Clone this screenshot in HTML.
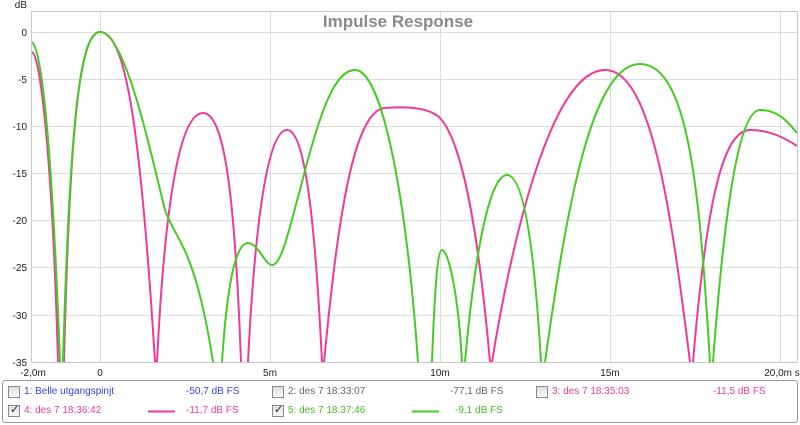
<!DOCTYPE html>
<html><head><style>
body{margin:0;width:800px;height:425px;background:#fff;font-family:"Liberation Sans",sans-serif;overflow:hidden;position:relative}
.t{position:absolute;font-size:10px;white-space:nowrap}
.cb{position:absolute;width:10px;height:10px;border:1px solid #8a8a8a;background:linear-gradient(#e0e0e0,#f8f8f8)}
.ck::after{content:"✓";position:absolute;left:1px;top:-3px;font-size:11px;color:#223;}
</style></head><body>
<svg width="800" height="425" style="position:absolute;left:0;top:0">
<g stroke="#dcdcdc" stroke-width="1">
<line x1="32" y1="32.5" x2="797" y2="32.5"/><line x1="32" y1="79.5" x2="797" y2="79.5"/><line x1="32" y1="126.5" x2="797" y2="126.5"/><line x1="32" y1="173.5" x2="797" y2="173.5"/><line x1="32" y1="220.5" x2="797" y2="220.5"/><line x1="32" y1="267.5" x2="797" y2="267.5"/><line x1="32" y1="315.5" x2="797" y2="315.5"/>
<line x1="100.5" y1="12" x2="100.5" y2="362"/><line x1="270.5" y1="12" x2="270.5" y2="362"/><line x1="440.5" y1="12" x2="440.5" y2="362"/><line x1="610.5" y1="12" x2="610.5" y2="362"/><line x1="780.5" y1="12" x2="780.5" y2="362"/>
</g>
<rect x="31.5" y="11.5" width="766" height="351" fill="none" stroke="#c8c8c8"/>
<text x="398" y="27" text-anchor="middle" font-family="Liberation Sans" font-weight="bold" font-size="17" fill="#8a8a8a">Impulse Response</text>
<g fill="none" stroke-width="2" clip-path="url(#c)">
<path stroke="#ee3a9a" d="M32,52 C40,55 52,150 58,362 M64,362 C70,120 80,32 100,32 C125,32 140,120 155,362 M157,362 C165,200 180,113 203,113 C225,113 235,200 241,362 M248,362 C255,220 268,130 287,130 C305,130 315,220 322,362 M324,362 C335,250 350,110 385,108 C410,106 430,108 440,118 C465,145 480,250 490,362 M492,362 C510,250 550,70 605,70 C650,70 670,200 690,362 M693,362 C705,220 720,130 750,130 C770,130 785,138 797,146"/>
<path stroke="#44cc22" d="M32,42 C42,50 52,150 60,362 M63,362 C70,120 80,32 100,32 C125,32 150,150 165,210 C175,240 195,245 213,362 M222,362 C228,270 238,243 248,243 C258,243 265,265 272,265 C282,265 290,225 300,190 C320,110 335,70 355,70 C380,70 405,180 418,362 M432,362 C435,280 438,250 442,250 C448,250 458,290 462,362 M465,362 C475,250 490,175 507,175 C525,175 535,260 541,362 M545,362 C565,220 590,64 640,64 C690,64 700,200 710,362 M713,362 C725,200 740,110 760,110 C780,110 790,125 797,133"/>
</g>
<defs><clipPath id="c"><rect x="32" y="12" width="765" height="350"/></clipPath></defs>
<g font-family="Liberation Sans" font-size="10" fill="#222" text-anchor="end">
<text x="27" y="36">0</text><text x="27" y="83">-5</text><text x="27" y="130">-10</text><text x="27" y="177">-15</text><text x="27" y="224">-20</text><text x="27" y="271">-25</text><text x="27" y="319">-30</text><text x="27" y="366">-35</text>
<text x="27" y="8">dB</text>
</g>
<g font-family="Liberation Sans" font-size="10" fill="#222" text-anchor="middle">
<text x="33" y="376">-2,0m</text><text x="100" y="376">0</text><text x="270" y="376">5m</text><text x="440" y="376">10m</text><text x="610" y="376">15m</text><text x="782" y="376">20,0m s</text>
</g>
<rect x="2.5" y="380.5" width="795" height="42" rx="3" fill="none" stroke="#999"/>
<line x1="148" y1="411.5" x2="175" y2="411.5" stroke="#ee3a9a" stroke-width="2"/>
<line x1="412" y1="411.5" x2="439" y2="411.5" stroke="#44cc22" stroke-width="2"/>
</svg>
<div class="cb" style="left:8px;top:386px"></div><div class="t" style="left:24px;top:386px;color:#3344dd">1: Belle utgangspinjt</div>
<div class="t" style="left:186px;top:386px;color:#3344dd">-50,7 dB FS</div>
<div class="cb" style="left:272px;top:386px"></div><div class="t" style="left:288px;top:386px;color:#666">2: des 7 18:33:07</div>
<div class="t" style="left:450px;top:386px;color:#666">-77,1 dB FS</div>
<div class="cb" style="left:536px;top:386px"></div><div class="t" style="left:552px;top:386px;color:#ee3a9a">3: des 7 18:35:03</div>
<div class="t" style="left:713px;top:386px;color:#ee3a9a">-11,5 dB FS</div>
<div class="cb ck" style="left:8px;top:405px"></div><div class="t" style="left:24px;top:405px;color:#ee3a9a">4: des 7 18:36:42</div>
<div class="t" style="left:186px;top:405px;color:#ee3a9a">-11,7 dB FS</div>
<div class="cb ck" style="left:272px;top:405px"></div><div class="t" style="left:288px;top:405px;color:#44bb22">5: des 7 18:37:46</div>
<div class="t" style="left:455px;top:405px;color:#44bb22">-9,1 dB FS</div>
</body></html>
